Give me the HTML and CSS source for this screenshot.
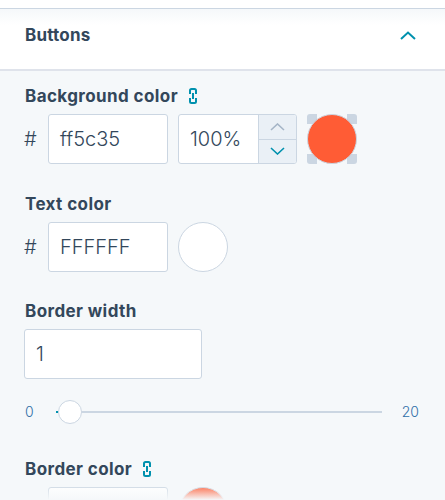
FILE: index.html
```html
<!DOCTYPE html>
<html lang="en">
<head>
    <meta charset="UTF-8">
    <meta name="viewport" content="width=device-width, initial-scale=1.0">
    <title>Buttons</title>
    <link rel="stylesheet" href="styles.css">
</head>
<body>
    <div class="top-strip"></div>
    <div class="section-header">
        <span class="section-title">Buttons</span>
        <svg class="caret" width="16" height="9" viewBox="0 0 16 9"><path d="M1 8 L8 1.5 L15 8" fill="none" stroke="#0091ae" stroke-width="2"/></svg>
    </div>
    <div class="panel">
        <div class="field field-bg">
            <label class="field-label">Background color
                <svg class="link-icon" width="10" height="18" viewBox="0 0 10 18"><path d="M2 7V3.5Q2 2 3.5 2H6.5Q8 2 8 3.5V7M2 11V14.5Q2 16 3.5 16H6.5Q8 16 8 14.5V11M5 6V12" fill="none" stroke="#0091ae" stroke-width="2"/></svg>
            </label>
            <div class="color-row">
                <span class="hash">#</span>
                <div class="input hex-input">ff5c35</div>
                <div class="input opacity-input">
                    <span class="opacity-value">100%</span>
                    <div class="stepper">
                        <div class="step">
                            <svg width="15" height="8" viewBox="0 0 15 8"><path d="M1 7 L7.5 1 L14 7" fill="none" stroke="#a5b5c7" stroke-width="1.6"/></svg>
                        </div>
                        <div class="step step-down">
                            <svg width="15" height="8" viewBox="0 0 15 8"><path d="M1 1 L7.5 7 L14 1" fill="none" stroke="#0091ae" stroke-width="1.6"/></svg>
                        </div>
                    </div>
                </div>
                <div class="swatch swatch-alpha"><span class="swatch-fill swatch-orange"></span></div>
            </div>
        </div>

        <div class="field field-text">
            <label class="field-label">Text color</label>
            <div class="color-row">
                <span class="hash">#</span>
                <div class="input hex-input">FFFFFF</div>
                <div class="swatch"><span class="swatch-fill swatch-white"></span></div>
            </div>
        </div>

        <div class="field field-width">
            <label class="field-label">Border width</label>
            <div class="input width-input">1</div>
            <div class="slider">
                <span class="slider-num">0</span>
                <div class="track"><span class="track-fill"></span><span class="thumb"></span></div>
                <span class="slider-num">20</span>
            </div>
        </div>

        <div class="field field-border">
            <label class="field-label">Border color
                <svg class="link-icon" width="10" height="18" viewBox="0 0 10 18"><path d="M2 7V3.5Q2 2 3.5 2H6.5Q8 2 8 3.5V7M2 11V14.5Q2 16 3.5 16H6.5Q8 16 8 14.5V11M5 6V12" fill="none" stroke="#0091ae" stroke-width="2"/></svg>
            </label>
            <div class="color-row">
                <span class="hash"></span>
                <div class="input hex-input"></div>
                <div class="swatch"><span class="swatch-fill swatch-orange"></span></div>
            </div>
        </div>
    </div>
    <div class="bottom-fade"></div>
</body>
</html>
```

FILE: styles.css
```css
* {
    margin: 0;
    padding: 0;
    box-sizing: border-box;
}
html, body {
    height: 500px;
    overflow: hidden;
}
body {
    position: relative;
    background: #f5f8fa;
    color: #33475b;
    font-family: Inter, sans-serif;
}
.top-strip {
    height: 9px;
    background: #fff;
    border-bottom: 1px solid #cbd6e2;
}
.section-header {
    display: flex;
    justify-content: space-between;
    align-items: center;
    height: 62px;
    padding: 0 29px 8px 25px;
    background: linear-gradient(#f5f8fa, #fff 16px);
    border-bottom: 2px solid #dfe3eb;
}
.section-title {
    font-size: 17px;
    font-weight: 700;
    letter-spacing: 0.2px;
}
.panel {
    padding: 0 24px;
}
.field-label {
    display: flex;
    align-items: center;
    gap: 10px;
    height: 22px;
    padding-left: 1px;
    font-size: 17px;
    font-weight: 700;
    letter-spacing: 0.4px;
}
.field-bg { padding-top: 14px; }
.field-text { padding-top: 29px; }
.field-width { padding-top: 28px; }
.field-border { padding-top: 38px; }
.color-row {
    display: flex;
    align-items: center;
    margin-top: 7px;
}
.hash {
    width: 24px;
    font-size: 20px;
    font-weight: 350;
}
.input {
    height: 50px;
    background: #fff;
    border: 1px solid #cbd6e2;
    border-radius: 3px;
    font-size: 20px;
    font-weight: 350;
    line-height: 48px;
    padding-left: 11px;
}
.hex-input {
    width: 120px;
}
.opacity-input {
    display: flex;
    width: 119px;
    margin-left: 10px;
    overflow: hidden;
}
.opacity-value {
    flex: 1;
}
.stepper {
    width: 38px;
    display: flex;
    flex-direction: column;
    border-left: 1px solid #cbd6e2;
    background: #eaf0f6;
}
.step {
    flex: 1;
    display: flex;
    align-items: center;
    justify-content: center;
}
.step-down {
    border-top: 1px solid #cbd6e2;
}
.swatch {
    position: relative;
    width: 50px;
    height: 50px;
    margin-left: 10px;
}
.swatch-alpha {
    background:
        linear-gradient(#cbd6e2, #cbd6e2) 0 0 / 10px 10px no-repeat,
        linear-gradient(#cbd6e2, #cbd6e2) 100% 0 / 10px 10px no-repeat,
        linear-gradient(#cbd6e2, #cbd6e2) 0 100% / 10px 10px no-repeat,
        linear-gradient(#cbd6e2, #cbd6e2) 100% 100% / 10px 10px no-repeat;
    border-radius: 3px;
}
.swatch-fill {
    display: block;
    width: 100%;
    height: 100%;
    border-radius: 50%;
    border: 1px solid #cbd6e2;
}
.swatch-orange {
    background: #ff5c35;
}
.swatch-white {
    background: #fff;
}
.width-input {
    width: 178px;
    margin-top: 7px;
}
.slider {
    display: flex;
    align-items: center;
    margin-top: 24px;
    padding-left: 1px;
}
.slider-num {
    font-size: 14px;
    font-weight: 300;
    color: #2f6fa8;
}
.track {
    position: relative;
    flex: none;
    width: 326px;
    height: 2px;
    margin: 0 20px 0 22px;
    background: #cbd6e2;
}
.track-fill {
    position: absolute;
    left: 0;
    top: 0;
    width: 4px;
    height: 2px;
    background: #0091ae;
}
.thumb {
    position: absolute;
    left: 2px;
    top: -11px;
    width: 24px;
    height: 24px;
    border-radius: 50%;
    background: #fff;
    border: 1px solid #cbd6e2;
}
.bottom-fade {
    position: absolute;
    left: 0;
    right: 0;
    bottom: 0;
    height: 16px;
    background: linear-gradient(rgba(245, 248, 250, 0), #f5f8fa);
}
```
